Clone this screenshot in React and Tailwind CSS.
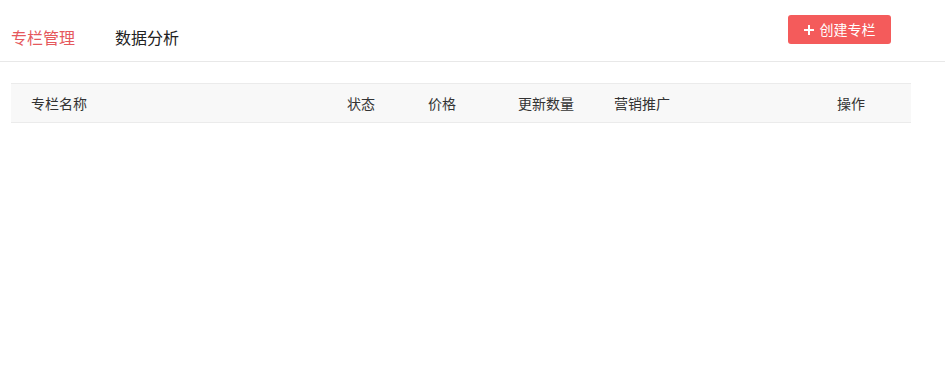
export default function App() {
  const cols = [
    { label: '专栏名称', w: 'w-[336px] pl-5' },
    { label: '状态', w: 'w-[81px]' },
    { label: '价格', w: 'w-[90px]' },
    { label: '更新数量', w: 'w-[96px]' },
    { label: '营销推广', w: 'w-[223px]' },
    { label: '操作', w: 'flex-1' },
  ]
  return (
    <div className="w-[945px] h-[390px] bg-white font-['Noto_Sans_CJK_SC','Microsoft_YaHei',sans-serif] text-[#333]">
      <div className="h-[62px] border-b border-[#e8e8e8] flex items-start pl-[11px] pr-[54px]">
        <div className="flex items-center h-[62px] pt-3 gap-10 text-[16px]">
          <span className="text-[#e5585c]">专栏管理</span>
          <span className="text-[#222]">数据分析</span>
        </div>
        <button className="ml-auto mt-[15px] w-[103px] h-[29px] rounded-[3px] bg-[#f45b5b] text-white text-[14px] flex items-center justify-center gap-[6px]">
          <svg width="10" height="10" viewBox="0 0 10 10" className="mt-px">
            <path d="M5 0v10M0 5h10" stroke="white" strokeWidth="2" />
          </svg>
          <span>创建专栏</span>
        </button>
      </div>
      <div className="pl-[11px] pt-[21px] w-[911px]">
        <div className="h-[40px] bg-[#f8f8f8] border-y border-[#ebebeb] flex items-center text-[14px] text-[#333]">
          {cols.map(c => (
            <div key={c.label} className={c.w}>{c.label}</div>
          ))}
        </div>
      </div>
    </div>
  )
}
